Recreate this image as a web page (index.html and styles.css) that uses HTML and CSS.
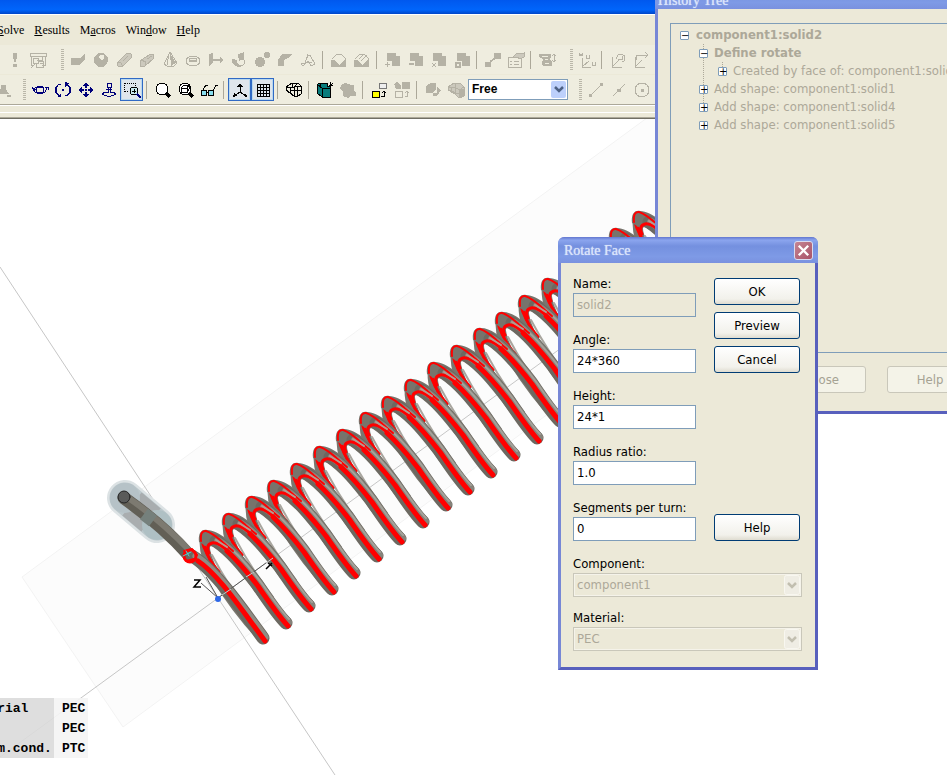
FILE: index.html
```html
<!DOCTYPE html>
<html lang="en">
<head>
<meta charset="utf-8">
<title>Rotate Face</title>
<link rel="stylesheet" href="styles.css">
</head>
<body>
<main class="app">
  <div class="app-title"></div>
  <nav class="menu">
    <a href="#"><u>S</u>olve</a><a href="#"><u>R</u>esults</a><a href="#">M<u>a</u>cros</a><a href="#">Win<u>d</u>ow</a><a href="#"><u>H</u>elp</a>
  </nav>
  <div class="bar bar-shapes">
    <button class="tool" aria-label="Update"><svg viewBox="0 0 18 18"><path class="f" d="M7 2h4v3l-1 6H8L7 5zM7 13h4v3H7z"/></svg></button>
    <button class="tool" aria-label="Parameters"><svg viewBox="0 0 18 18"><path class="s" d="M1 2h16v3H1zM2 5v9h3M16 5v9h-3M4 7h5v5H4zM8 5h5v4H8M9 10h5v6H7v-4M11 12h3M2 17l4-4"/></svg></button>
    <span class="grip"></span>
    <button class="tool" aria-label="Brick"><svg viewBox="0 0 18 18"><path class="f" d="M2 7h9l5-4v5l-5 6H2z"/></svg></button>
    <button class="tool" aria-label="Sphere"><svg viewBox="0 0 18 18"><circle class="f" cx="9" cy="9" r="7"/><path class="p" d="M8 4h4v4l-3 1-2-2z"/></svg></button>
    <button class="tool" aria-label="Cylinder"><svg viewBox="0 0 18 18"><path class="s hatch" d="M2 12L12 2l4 1v4L7 16l-4-1z"/><path class="s" d="M2 11l4 1 2 4M11 3l-6 6M8 10l5-5"/></svg></button>
    <button class="tool" aria-label="Elliptical cylinder"><svg viewBox="0 0 18 18"><path class="s hatch" d="M2 13l1-4 10-6 3 1-1 4-8 7-4 1z"/><path class="s" d="M3 9l5 2-1 4M9 8l5-3"/></svg></button>
    <button class="tool" aria-label="Cone"><svg viewBox="0 0 18 18"><path class="s" d="M9 1L3 13l3 2h7l3-3zM8 3L6 14"/><path class="f" d="M9 2l6 10-5 3z"/></svg></button>
    <button class="tool" aria-label="Torus"><svg viewBox="0 0 18 18"><ellipse class="s" cx="9" cy="10" rx="7" ry="5"/><ellipse class="s" cx="9" cy="9" rx="4" ry="2"/><path class="f" d="M6 9h6v2H6z"/></svg></button>
    <button class="tool" aria-label="Extrude"><svg viewBox="0 0 18 18"><path class="f" d="M2 3l4-1v9l-4 4zM6 8h7V6l4 3-4 3v-2H6z"/></svg></button>
    <button class="tool" aria-label="Rotate"><svg viewBox="0 0 18 18"><path class="f" d="M8 3l6-2v7l-5 2zM2 8l5 1v3l4 4-6-1-3-3z"/><path class="s" d="M13 8c4 4 0 8-6 7"/></svg></button>
    <button class="tool" aria-label="Loft"><svg viewBox="0 0 18 18"><circle class="f" cx="7" cy="11" r="5"/><circle class="f" cx="14" cy="4" r="3"/></svg></button>
    <button class="tool" aria-label="Shell"><svg viewBox="0 0 18 18"><path class="f" d="M2 15V9l4-6h10l-4 4-4 2v6z"/></svg></button>
    <button class="tool" aria-label="Curve"><svg viewBox="0 0 18 18"><path class="s" d="M2 13l4-1 3-8h2l5 9-4 2-3-5-5 5zM6 12L9 3M8 11h5"/></svg></button>
    <span class="sep"></span>
    <button class="tool" aria-label="Blend"><svg viewBox="0 0 18 18"><path class="f" d="M1 9h3l5 5 6-6h1v8H1z"/><path class="s" d="M2 8l5-5h4l5 5"/></svg></button>
    <button class="tool" aria-label="Chamfer"><svg viewBox="0 0 18 18"><path class="f" d="M1 9h3l5 5 6-6h1v8H1z"/><path class="s" d="M2 8l5-5h4l5 5M6 8l5-5M8 10l6-6"/></svg></button>
    <span class="sep"></span>
    <button class="tool" aria-label="Add"><svg viewBox="0 0 18 18"><path class="f" d="M3 2h9v3h4v10H8v-5H3z"/><path class="s" d="M1 13h5M3 11v5"/></svg></button>
    <button class="tool" aria-label="Subtract"><svg viewBox="0 0 18 18"><path class="f" d="M3 2h9v3h4v10H8v-5H3zM2 12h5v2H2z"/></svg></button>
    <button class="tool" aria-label="Intersect"><svg viewBox="0 0 18 18"><path class="f" d="M3 2h9v3h4v10H8v-5H3z"/><path class="s" d="M2 12l4 4M6 12l-4 4"/></svg></button>
    <button class="tool" aria-label="Insert"><svg viewBox="0 0 18 18"><path class="f" d="M4 2h9v3h4v10H9v-5H4zM2 11h6v6H2z"/><path class="p" d="M4 13h2v2H4z"/></svg></button>
    <span class="sep"></span>
    <button class="tool" aria-label="Transform"><svg viewBox="0 0 18 18"><path class="f" d="M10 2h7v6h-7zM1 11h6v5H1z"/><path class="s2" d="M6 11l5-4"/></svg></button>
    <button class="tool" aria-label="Properties"><svg viewBox="0 0 18 18"><path class="s" d="M1 6h13v10H1zM3 10h2M7 10h5M3 13h2M7 13h5"/><path class="s hatch" d="M6 6l4-4 4 1 3-1v4l-4 2-3-2"/></svg></button>
    <span class="sep"></span>
    <button class="tool" aria-label="Macro list"><svg viewBox="0 0 18 18"><path class="f" d="M1 3h12v3l-2 2 3 3v4H5l-1-3 1-4-4-2z"/><path class="p" d="M4 5h6v1H4zM7 8h3v1H7zM7 12h4v1H7z"/><path class="s" d="M16 3v8M14 5l2-2 2 2M14 9l2 2 2-2"/></svg></button>
    <span class="grip"></span>
    <button class="tool" aria-label="Local axes"><svg viewBox="0 0 18 18"><path class="s" d="M1 2l1 3 1-2 1 2 1-3M8 4v3h3V4M14 11v3h3v-3M4 7v9h9M4 16l7-6"/></svg></button>
    <span class="sep"></span>
    <button class="tool" aria-label="Rotate axes"><svg viewBox="0 0 18 18"><path class="s" d="M3 6v10h10M3 16l8-8M8 8a4 4 0 1 1 5 3M9 8h4v-3"/></svg></button>
    <button class="tool" aria-label="Move axes"><svg viewBox="0 0 18 18"><path class="s" d="M3 6v10h10M3 16l7-7M4 9V4h11M13 1l3 3-3 3"/></svg></button>
  </div>
  <div class="bar bar-view">
    <button class="tool" aria-label="Pick"><svg viewBox="0 0 18 18"><path class="f" d="M7 4h5v4l3 5H6zM13 14h4v2h-4z"/></svg></button>
    <span class="grip grip-short"></span>
    <button class="tool navy" aria-label="Rotate view"><svg viewBox="0 0 18 18"><circle class="s" cx="9" cy="9" r="4"/><path class="s" d="M12 6H6L2 8l2 3 5 1 5-1 2-4M1 6l1 2 3 0M14 6h3v3"/></svg></button>
    <button class="tool navy" aria-label="Rotate plane"><svg viewBox="0 0 18 18"><path class="s" d="M7 3C0 4 0 12 5 15M11 15c7-1 7-9 2-12M6 3C1 5 1 12 5 14M12 15c5-2 5-9 1-11"/><path class="f" d="M3 16h4v-4zM11 1v5l4-4zM8 8h2v2H8z"/></svg></button>
    <button class="tool navy" aria-label="Pan"><svg viewBox="0 0 18 18"><path class="s2" d="M9 2v5M9 11v5M2 9h5M11 9h5"/><path class="f" d="M9 1l3 4H6zM9 17l3-4H6zM1 9l4-3v6zM17 9l-4-3v6zM8 8h2v2H8z"/></svg></button>
    <button class="tool navy" aria-label="Dynamic zoom"><svg viewBox="0 0 18 18"><path class="s" d="M7 2h4v4H7zM8 6v5H5l-3 2 7 3 7-3-3-2h-3V6M6 8h6"/></svg></button>
    <button class="tool on" aria-label="Zoom window"><svg viewBox="0 0 18 18"><path class="s dash" d="M1 11V2h11v4M2 10h4"/><circle cx="11" cy="10" r="4" fill="#c9e8ee" stroke="#000"/><path class="s" d="M9 10h4M11 8v4"/><path class="s2 blue" d="M14 13l4 4"/></svg></button>
    <span class="sep"></span>
    <button class="tool" aria-label="Reset zoom"><svg viewBox="0 0 18 18"><circle cx="8" cy="8" r="6" fill="#fff" stroke="#000"/><path class="s3" d="M12 12l4 4"/></svg></button>
    <button class="tool" aria-label="Zoom to structure"><svg viewBox="0 0 18 18"><circle cx="8" cy="8" r="6" fill="#fff" stroke="#000"/><path class="s black" d="M4 11V7h6v4zM4 7l3-3h5v4l-2 3M10 7l2-3"/><path class="s3" d="M12 12l4 4"/></svg></button>
    <button class="tool" aria-label="View options"><svg viewBox="0 0 18 18"><circle cx="4" cy="12" r="3" fill="#8de" stroke="#000"/><circle cx="11" cy="12" r="3" fill="#8de" stroke="#000"/><path class="s black" d="M7 11h2M3 9l3-5h2M13 10l3-6h2"/></svg></button>
    <span class="sep"></span>
    <button class="tool on" aria-label="Axes"><svg viewBox="0 0 18 18"><path class="s black" d="M9 4v7l-6 4M9 11l6 4"/><path d="M9 2l3 4H6zM2 16l1-4 3 3zM16 16l-4-1 3-3z"/></svg></button>
    <button class="tool on" aria-label="Working plane"><svg viewBox="0 0 18 18"><path class="s black" d="M3 3h12v12H3zM6 3v12M9 3v12M12 3v12M3 6h12M3 9h12M3 12h12"/></svg></button>
    <span class="sep"></span>
    <button class="tool" aria-label="Wireframe"><svg viewBox="0 0 18 18"><path class="s black" d="M1 6l6-4h6l3 3v8l-3 2H9L1 9zM1 6h8l7-1M5 6v6l4 3V6l4-4M5 9h11M7 2v4M12 6v9"/></svg></button>
    <span class="sep"></span>
    <button class="tool" aria-label="Cutting plane"><svg viewBox="0 0 18 18"><path d="M1 4l2-2h8v3h3v11H6l-5-4z" fill="#087c7c" stroke="#000"/><path class="s black" d="M2 4l4 3v9M6 7h8M4 3v3M12 6l5-4M14 1v3h3"/></svg></button>
    <button class="tool" aria-label="Shape"><svg viewBox="0 0 18 18"><path class="f" d="M2 4l4-2 6 2h3v6l2 2v3h-5l-3 2-5-2v-4L1 8z"/></svg></button>
    <span class="sep"></span>
    <button class="tool" aria-label="Assign layer"><svg viewBox="0 0 18 18"><path d="M9 2h7v5H9z" fill="#eee" stroke="#777"/><path d="M2 10h7v6H2z" fill="#ff0" stroke="#000"/><path class="s black" d="M11 15h3v-5M12 12l2-2 2 2"/></svg></button>
    <button class="tool" aria-label="Swap layer"><svg viewBox="0 0 18 18"><path class="f" d="M9 1h8v7H9zM1 3l3-2 4 3v4H3z"/><path class="s" d="M2 10h7v6H2zM12 15h2v-5M12 12l2-2 2 2"/></svg></button>
    <span class="sep"></span>
    <button class="tool" aria-label="Move shape"><svg viewBox="0 0 18 18"><path class="f" d="M2 5l5-3h5v6l-4 4H2zM13 6l4 3-4 6H9v-3h4z"/></svg></button>
    <button class="tool" aria-label="Mesh view"><svg viewBox="0 0 18 18"><path class="s hatch" d="M1 6l6-4h6l4 4v9l-5 2-4-4-7-4z"/><path class="s" d="M1 6h7l4 3 5-3M8 6V2M4 6v5M8 6v7M12 9v8M1 9l11 4"/><path class="f" d="M13 8h4v7l-4 2z"/></svg></button>
    <select class="pick" aria-label="Pick mode"><option>Free</option></select>
    <span class="grip grip-mid"></span>
    <button class="tool" aria-label="Edge length"><svg viewBox="0 0 18 18"><path class="s" d="M3 15L15 3"/><path class="f" d="M2 13h3v3H2zM13 2h3v3h-3z"/></svg></button>
    <button class="tool" aria-label="Edge mid"><svg viewBox="0 0 18 18"><path class="s" d="M3 15L15 3"/><path class="f" d="M7 8h4v3H7z"/></svg></button>
    <button class="tool" aria-label="Centre point"><svg viewBox="0 0 18 18"><circle class="s" cx="9" cy="9" r="7"/><path class="f" d="M8 8h3v3H8z"/></svg></button>
  </div>
  <div class="strip"></div>

  <section class="stage">
    <svg class="scene" viewBox="0 119 947 656" preserveAspectRatio="xMinYMin slice">
      <defs>
        <!-- far half of one turn -->
        <g id="back" fill="none" stroke-linecap="round">
          <path d="M205 538C203 551 208 563 215 575C229 598 246 621 264 639" stroke="#7a776f" stroke-width="10"/>
          <path d="M210 560C222 582 242 610 263 638" stroke="#615e56" stroke-width="3"/>
          <path d="M212 555C223 576 236 596 250 614" stroke="#a9a69f" stroke-width="2"/>
          <path d="M219 572C209 560 203 549 201 539" stroke="#f00" stroke-width="2"/>
          <path d="M205 547C207 556 212 564 219 572" stroke="#f00" stroke-width="3"/>
        </g>
        <!-- near half of one turn -->
        <g id="front" fill="none" stroke-linecap="round">
          <path d="M199 542C198 534 201 529 207 530C219 530 234 544 244 558L229 560C217 547 209 543 209 549L206 546z" fill="#77746c"/>
          <path d="M216 541C231 551 243 566 257 584C268 600 277 614 286 623" stroke="#6c6961" stroke-width="13"/>
          <path d="M218 541C233 550 246 567 260 585C271 601 280 614 288 622" stroke="#86837b" stroke-width="8"/>
          <path d="M223 542C238 553 251 569 263 585C274 601 281 611 289 619" stroke="#a5a29a" stroke-width="2"/>
          <path d="M201 541Q200 530 206 531C214 533 222 542 233 551" stroke="#f00" stroke-width="2"/>
          <path d="M209 553C206 548 208 544 212 543C217 541 224 547 231 554" stroke="#f00" stroke-width="3"/>
          <path d="M227 551C240 563 248 573 258 586C269 602 278 615 288 626" stroke="#f00" stroke-width="5"/>
          <path d="M216 540L227 547" stroke="#b89a90" stroke-width="2"/>
        </g>
        <g id="back5"><use href="#back" x="91" y="-67"/><use href="#back" x="68" y="-50"/><use href="#back" x="46" y="-34"/><use href="#back" x="23" y="-17"/><use href="#back"/></g>
        <g id="front5"><use href="#front" x="91" y="-67"/><use href="#front" x="68" y="-50"/><use href="#front" x="46" y="-34"/><use href="#front" x="23" y="-17"/><use href="#front"/></g>
      </defs>
      <path d="M22 577L655 112H947V120L123 727z" fill="#fcfcfc" stroke="#f3f3f3"/>
      <path d="M0 267L218 598L335 775M0 757L218 598L660 276" fill="none" stroke="#c6c6c6"/>
      <use href="#back5" x="342" y="-252"/><use href="#back5" x="228" y="-168"/><use href="#back5" x="114" y="-84"/><use href="#back5"/>
      <g fill="none" stroke-linecap="round">
        <path d="M125 498L157 525" stroke="#dce2e4" stroke-width="36"/>
        <path d="M125 498L157 525" stroke="#bcc8cc" stroke-width="31"/>
        <path d="M132 504L151 520" stroke="#a9adaf" stroke-width="30" stroke-linecap="butt"/>
        <circle cx="125" cy="498" r="15" fill="#b6c2c7"/>
        <circle cx="157" cy="525" r="15" fill="#afc0c4"/>
        <path d="M124 498C145 513 167 530 188 554" stroke="#625f56" stroke-width="13"/>
        <path d="M127 497C149 512 172 532 191 552" stroke="#7d7a71" stroke-width="6"/>
        <path d="M144 514L153 521" stroke="#75807c" stroke-width="13" stroke-linecap="butt"/>
        <circle cx="124" cy="497" r="6" fill="#5a5b5a" stroke="#252525"/>
        <path d="M192 556C214 569 240 606 263 638" stroke="#6c6961" stroke-width="13"/>
        <path d="M196 556C219 572 243 607 265 637" stroke="#8f8c84" stroke-width="7"/>
        <path d="M198 561C218 574 241 609 265 641" stroke="#f00" stroke-width="5"/>
        <circle cx="190" cy="556" r="6" stroke="#f00" stroke-width="3"/>
        <path d="M184 551l8-2 5 6M186 561l8-2" stroke="#f00" stroke-width="2"/>
        <path d="M183 556l8-4M186 551l3 5" stroke="#48d6d6" stroke-width="1"/>
      </g>
      <use href="#front5" x="342" y="-252"/><use href="#front5" x="228" y="-168"/><use href="#front5" x="114" y="-84"/><use href="#front5"/>
      <path d="M218 598L270 560M218 598L201 583M218 598L206 577" stroke="#555" fill="none"/>
      <path d="M222 595L231 589M246 577L254 572M266 563L273 558" stroke="#ccc" fill="none"/>
      <circle cx="218" cy="599" r="3" fill="#2c67e8"/>
      <path d="M194 580h6l-6 7h7M266 569l6-6M268 563l4 3" stroke="#000" stroke-width="1.5" fill="none"/>
    </svg>
    <table class="legend">
      <tr><th>Material</th><td>PEC</td></tr>
      <tr><th></th><td>PEC</td></tr>
      <tr><th>Therm.cond.</th><td>PTC</td></tr>
    </table>
  </section>
</main>

<section class="win history">
  <header class="win-title"><h2>History Tree</h2></header>
  <div class="history-body">
    <ul class="tree">
      <li><span class="node"><button class="box" aria-label="Collapse">−</button><b>component1:solid2</b></span>
        <ul>
          <li><span class="node"><button class="box" aria-label="Collapse">−</button><b>Define rotate</b></span>
            <ul><li><span class="node"><button class="box" aria-label="Expand">+</button>Created by face of: component1:solid2</span></li></ul>
          </li>
          <li><span class="node"><button class="box" aria-label="Expand">+</button>Add shape: component1:solid1</span></li>
          <li><span class="node"><button class="box" aria-label="Expand">+</button>Add shape: component1:solid4</span></li>
          <li><span class="node"><button class="box" aria-label="Expand">+</button>Add shape: component1:solid5</span></li>
        </ul>
      </li>
    </ul>
    <div class="history-actions"><button class="btn" disabled>Close</button><button class="btn" disabled>Help</button></div>
  </div>
</section>

<section class="win rotate">
  <header class="win-title"><h2>Rotate Face</h2><button class="close" aria-label="Close"><svg viewBox="0 0 18 18"><path d="M4 4l10 10M14 4L4 14" stroke="#fff" stroke-width="2.5"/></svg></button></header>
  <form class="form">
    <div class="form-top">
      <div class="fields">
        <div class="field"><label for="name">Name:</label><input id="name" value="solid2" disabled></div>
        <div class="field"><label for="angle">Angle:</label><input id="angle" value="24*360"></div>
        <div class="field"><label for="height">Height:</label><input id="height" value="24*1"></div>
        <div class="field"><label for="ratio">Radius ratio:</label><input id="ratio" value="1.0"></div>
        <div class="field"><label for="segments">Segments per turn:</label><input id="segments" value="0"></div>
      </div>
      <div class="actions">
        <button type="button" class="btn">OK</button>
        <button type="button" class="btn">Preview</button>
        <button type="button" class="btn">Cancel</button>
        <button type="button" class="btn btn-help">Help</button>
      </div>
    </div>
    <div class="lists">
      <div class="field"><label for="component">Component:</label><select id="component" disabled><option>component1</option></select></div>
      <div class="field"><label for="material">Material:</label><select id="material" disabled><option>PEC</option></select></div>
    </div>
  </form>
</section>
</body>
</html>
```
FILE: styles.css
```css
* { box-sizing: border-box; }
:root {
  --face: #ece9d8;
  --muted: #aca899;
  --edge: #7f9db9;
  --ui: "DejaVu Sans Condensed", "DejaVu Sans", sans-serif;
}
body {
  margin: 0;
  height: 100vh;
  overflow: hidden;
  position: relative;
  background: #fff;
  font: 13px/18px var(--ui);
}
button, input, select { font: inherit; margin: 0; }

/* Main window */
.app { height: 100%; display: flex; flex-direction: column; }
.app-title {
  flex: none;
  height: 15px;
  background: linear-gradient(#0058ee, #0065fb 70%, #0046c8);
  border-bottom: 1px solid #fff;
}
.menu {
  flex: none;
  display: flex;
  gap: 10px;
  align-items: center;
  height: 30px;
  margin-left: -3px;
  background: var(--face);
  font: 12px/16px "Liberation Serif", serif;
}
.menu a { color: #000; text-decoration: none; }
.bar {
  flex: none;
  display: flex;
  align-items: center;
  height: 30px;
  background: #efeddf;
  border-bottom: 1px solid var(--face);
  overflow: hidden;
}
.bar-shapes { padding-left: 3px; }
.bar-view { border-bottom: 1px solid #aca899; }
.bar-view > :first-child { margin-left: -9px; }
.tool {
  flex: none;
  width: 23px;
  height: 23px;
  padding: 0;
  display: grid;
  place-items: center;
  border: 1px solid transparent;
  background: none;
  color: #b5b2a5;
}
.tool.on { background: #dfe5ec; border-color: #316ac5; color: #000; box-shadow: inset 0 0 0 1px #b9d8ee; }
.tool.navy { color: #00007b; }
.tool svg { width: 18px; height: 18px; shape-rendering: crispEdges; }
.f { fill: currentColor; }
.p { fill: #efeddf; }
.s { fill: none; stroke: currentColor; }
.s2 { fill: none; stroke: currentColor; stroke-width: 2; }
.s3 { fill: none; stroke: #000; stroke-width: 3; }
.hatch { fill: #ccc9bd; }
.dash { stroke-dasharray: 1 1; }
.black { stroke: #000; }
.blue { stroke: #00007b; }
.sep { flex: none; width: 8px; height: 18px; background: linear-gradient(#aca899, #aca899) 3px 0 / 1px 100% no-repeat; }
.grip {
  flex: none;
  width: 17px;
  height: 21px;
  background: repeating-linear-gradient(#bab7a9 0 1px, transparent 1px 2px) 12px 0 / 3px 100% no-repeat;
}
.grip-short { width: 14px; background-position: 9px 0; }
.grip-mid { width: 16px; background-position: 11px 0; }
select {
  appearance: none;
  border: 1px solid var(--edge);
  border-radius: 0;
  background-repeat: no-repeat;
}
.pick {
  flex: none;
  width: 100px;
  height: 21px;
  margin-left: 1px;
  padding: 0 3px;
  color: #000;
  font: bold 12px/17px "Liberation Sans", sans-serif;
  background-color: #fff;
  background-image: url("data:image/svg+xml,%3Csvg xmlns='http://www.w3.org/2000/svg' width='15' height='17'%3E%3Crect width='15' height='17' rx='2' fill='%23bdd0fb'/%3E%3Cpath d='M4 6l4 4 4-4' fill='none' stroke='%234d6185' stroke-width='2.5'/%3E%3C/svg%3E");
  background-position: right 1px center;
}
.strip {
  flex: none;
  height: 14px;
  background: linear-gradient(#fff 0 1px, var(--face) 1px 7px, #fff 7px 8px, var(--face) 8px 12px, #aca899 12px 13px, #716f64 13px);
}
.stage { flex: 1; min-height: 0; position: relative; overflow: hidden; }
.scene { display: block; width: 100%; height: 100%; }
.legend {
  position: absolute;
  left: -34px;
  bottom: 17px;
  border-collapse: collapse;
  font: bold 13px/18px "Liberation Mono", monospace;
}
.legend th, .legend td { height: 20px; padding: 2px 0 0; text-align: left; }
.legend th { width: 88px; background: rgba(218, 218, 218, .9); }
.legend td { width: 34px; padding-left: 8px; background: rgba(244, 244, 244, .9); }

/* Floating windows */
.win { position: absolute; background: var(--face); border: 3px solid #7787d6; border-top: 0; border-right-color: #5860bd; border-bottom-color: #5860bd; }
.win-title {
  display: flex;
  align-items: center;
  justify-content: space-between;
  height: 26px;
  margin: 0 -3px;
  padding: 0 5px 0 6px;
  color: #dce5fb;
  background: linear-gradient(#6377cf, #8ba5ee 12%, #7490df 35%, #7e9ae6 75%, #7a91df);
}
.win-title h2 { margin: 0; padding-top: 2px; font: 14px/18px "Liberation Serif", serif; text-shadow: 0 0 1px #dce5fb; }
.btn {
  width: 86px;
  height: 27px;
  padding: 0;
  border: 1px solid #003c74;
  border-radius: 3px;
  color: #000;
  background: linear-gradient(#fff, #f2f1eb 80%, #dfdcd0);
}
.btn:disabled { color: #a5a293; background: #f4f3e8; border-color: #c9c7ba; }

.history { left: 655px; right: -60px; top: -17px; }
.history .win-title { padding-left: 3px; }
.history .win-title h2 { padding-top: 10px; }
.history-body { padding: 14px 12px 18px; }
.tree, .tree ul { list-style: none; margin: 0; padding: 0; color: var(--muted); white-space: nowrap; }
.tree { height: 330px; padding: 2px 9px; border: 1px solid var(--edge); overflow: hidden; }
.tree ul { padding-left: 19px; }
.node { display: flex; align-items: center; gap: 7px; height: 18px; }
.tree ul .node { gap: 6px; }
.tree ul { background: repeating-linear-gradient(#aca899 0 1px, transparent 1px 2px) 23px 0 / 1px 64px no-repeat; }
.tree ul ul { background-size: 1px 8px; }
.box {
  flex: none;
  width: 9px;
  height: 9px;
  padding: 0;
  border: 1px solid var(--edge);
  border-radius: 1px;
  background: #fff;
  color: #000;
  font: 10px/7px "DejaVu Sans", sans-serif;
}
.history-actions { display: flex; gap: 21px; padding: 13px 0 0 110px; }
.history-actions .btn { flex: none; }

.rotate { left: 558px; top: 237px; width: 260px; border-radius: 7px 7px 0 0; }
.rotate .win-title { border-radius: 6px 6px 0 0; }
.close {
  width: 19px;
  height: 19px;
  padding: 0;
  border: 1px solid #dadcf0;
  border-radius: 3px;
  background: linear-gradient(135deg, #c58593, #a95268);
}
.close svg { display: block; width: 17px; height: 17px; }
.form { padding: 12px 12px 16px; }
.form-top { display: flex; gap: 18px; }
.fields, .lists { display: flex; flex-direction: column; gap: 14px; }
.fields { width: 123px; }
.lists { gap: 12px; padding-top: 14px; }
.field { display: flex; flex-direction: column; }
.field label { white-space: nowrap; }
.field input {
  width: 100%;
  height: 24px;
  padding: 0 3px 2px;
  border: 1px solid var(--edge);
  background: #fff;
  color: #000;
}
.field input:disabled { background: var(--face); color: var(--muted); }
.field select {
  width: 229px;
  height: 24px;
  padding: 0 3px;
  opacity: 1;
  border-color: #c9c7ba;
  color: var(--muted);
  background-color: var(--face);
  background-image: url("data:image/svg+xml,%3Csvg xmlns='http://www.w3.org/2000/svg' width='16' height='20'%3E%3Crect x='.5' y='.5' width='15' height='19' rx='2' fill='%23efede4' stroke='%23f8f7f0'/%3E%3Cpath d='M4 8l4 4 4-4' fill='none' stroke='%23c2bfb0' stroke-width='2.5'/%3E%3C/svg%3E");
  background-position: right 1px center;
  box-shadow: inset 0 0 0 1px #f5f3ea;
}
.actions { display: flex; flex-direction: column; gap: 7px; padding-top: 3px; }
.btn-help { margin-top: auto; }
```
